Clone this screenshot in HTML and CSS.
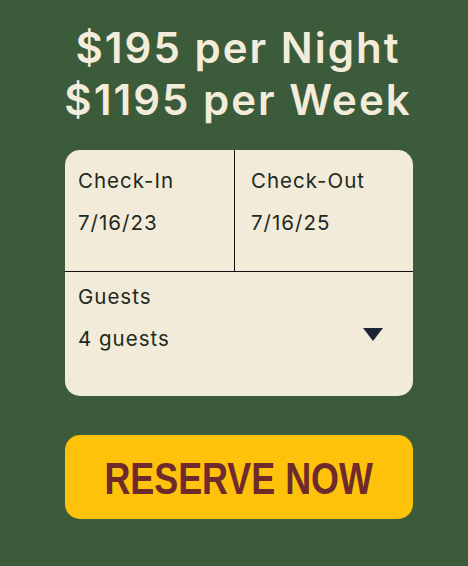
FILE: index.html
```html
<!DOCTYPE html>
<html>
<head>
<meta charset="utf-8">
<link rel="stylesheet" href="styles.css">
</head>
<body>
<main class="panel">
  <h1 class="price"><span>$195 per Night</span><span>$1195 per Week</span></h1>
  <section class="booking">
    <div class="dates">
      <div class="field field-left">
        <div class="label">Check-In</div>
        <div class="value">7/16/23</div>
      </div>
      <div class="field field-right">
        <div class="label">Check-Out</div>
        <div class="value">7/16/25</div>
      </div>
    </div>
    <div class="guests">
      <div class="label">Guests</div>
      <div class="guest-row">
        <div class="value">4 guests</div>
        <svg class="caret" width="20" height="13" viewBox="0 0 20 13"><polygon points="0,0 20,0 10,13" fill="#1c2535"/></svg>
      </div>
    </div>
  </section>
  <button class="reserve"><span class="reserve-text">RESERVE NOW</span></button>
</main>
</body>
</html>
```
FILE: styles.css
```css
html, body {
  margin: 0;
  padding: 0;
}
body {
  background: #3b5b3a;
  width: 468px;
  height: 566px;
  overflow: hidden;
  font-family: Inter, "Noto Sans", sans-serif;
}
.panel {
  display: flex;
  flex-direction: column;
  padding: 22px 0 0 65px;
  width: 348px;
}
.price {
  margin: 0 0 0 -22px;
  width: 390px;
  display: flex;
  flex-direction: column;
  align-items: center;
  color: #f3ecda;
  font-size: 42px;
  font-weight: 600;
  line-height: 52px;
  letter-spacing: 2px;
}
.booking {
  margin-top: 24px;
  background: #f2ebd9;
  border-radius: 15px;
  overflow: hidden;
  height: 246px;
  display: flex;
  flex-direction: column;
  color: #1d2a1d;
}
.dates {
  display: grid;
  grid-template-columns: 170px 1fr;
  height: 121px;
  border-bottom: 1.5px solid #111;
}
.field-left {
  border-right: 1.5px solid #111;
  padding: 18px 0 0 13px;
}
.field-right {
  padding: 18px 0 0 16px;
}
.label {
  font-size: 20.5px;
  line-height: 25px;
  letter-spacing: 1px;
}
.value {
  font-size: 20.5px;
  line-height: 25px;
  letter-spacing: 1px;
  margin-top: 17px;
}
.guests {
  padding: 12px 30px 0 13px;
}
.guest-row {
  display: flex;
  justify-content: space-between;
  align-items: flex-start;
}
.guest-row .value {
  margin-top: 17px;
}
.caret {
  margin-top: 19px;
}
.reserve {
  margin-top: 39px;
  height: 84px;
  border: none;
  border-radius: 15px;
  background: #fec20a;
  color: #6f2a2c;
  font-family: "Liberation Sans", Arial, sans-serif;
  font-weight: 700;
  font-size: 44px;
  padding: 4px 0 0;
  cursor: pointer;
}
.reserve-text {
  display: inline-block;
  transform: scaleX(0.815);
}
```
